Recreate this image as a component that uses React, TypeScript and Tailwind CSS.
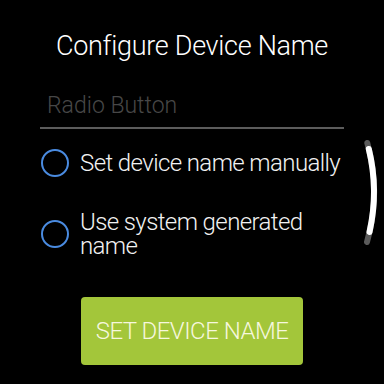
import React from "react"

const options = [
    { id: "manual", label: "Set device name manually" },
    { id: "system", label: "Use system generated name" },
]

function RadioCircle() {
    return <span className="block h-[28px] w-[28px] shrink-0 rounded-full border-2 border-[#4a8be0]" />
}

function ScrollIndicator() {
    return (
        <svg className="pointer-events-none absolute left-0 top-0" width="384" height="384" viewBox="0 0 384 384">
            <path d="M367.3 143 A182 182 0 0 1 367 242" fill="none" stroke="#5a5a5a" strokeWidth="6" strokeLinecap="round" />
            <path d="M368.8 149 A182 182 0 0 1 369.5 232" fill="none" stroke="#ffffff" strokeWidth="6" strokeLinecap="round" />
        </svg>
    )
}

export default function App() {
    return (
        <div
            className="relative h-[384px] w-[384px] overflow-hidden bg-black text-white"
            style={{ fontFamily: "Roboto, 'Noto Sans', sans-serif" }}
        >
            <h1 className="pt-[29px] text-center text-[27px] font-light leading-[34px] tracking-[-0.3px] text-white">
                Configure Device Name
            </h1>

            <div className="mx-[40px] mt-[29px] border-b-2 border-[#5c5c5c] pb-[7px] pl-[7px]">
                <span className="block text-[23px] font-light leading-[28px] text-[#474747]">Radio Button</span>
            </div>

            <div className="ml-[41px] mr-[28px] mt-[20px] flex flex-col gap-[33px]">
                {options.map((o) => (
                    <label key={o.id} className="flex items-center gap-[11px]">
                        <RadioCircle />
                        <span className="text-[24px] font-light leading-[24px] tracking-[-0.6px] text-[#f2f2f2]">{o.label}</span>
                    </label>
                ))}
            </div>

            <div className="mt-[39px] flex justify-center">
                <button className="flex h-[68px] w-[222px] items-center justify-center rounded-[4px] bg-[#a3c63a] text-[24px] font-light uppercase tracking-[-0.5px] text-[#f6f7de]">
                    Set device name
                </button>
            </div>

            <ScrollIndicator />
        </div>
    )
}
